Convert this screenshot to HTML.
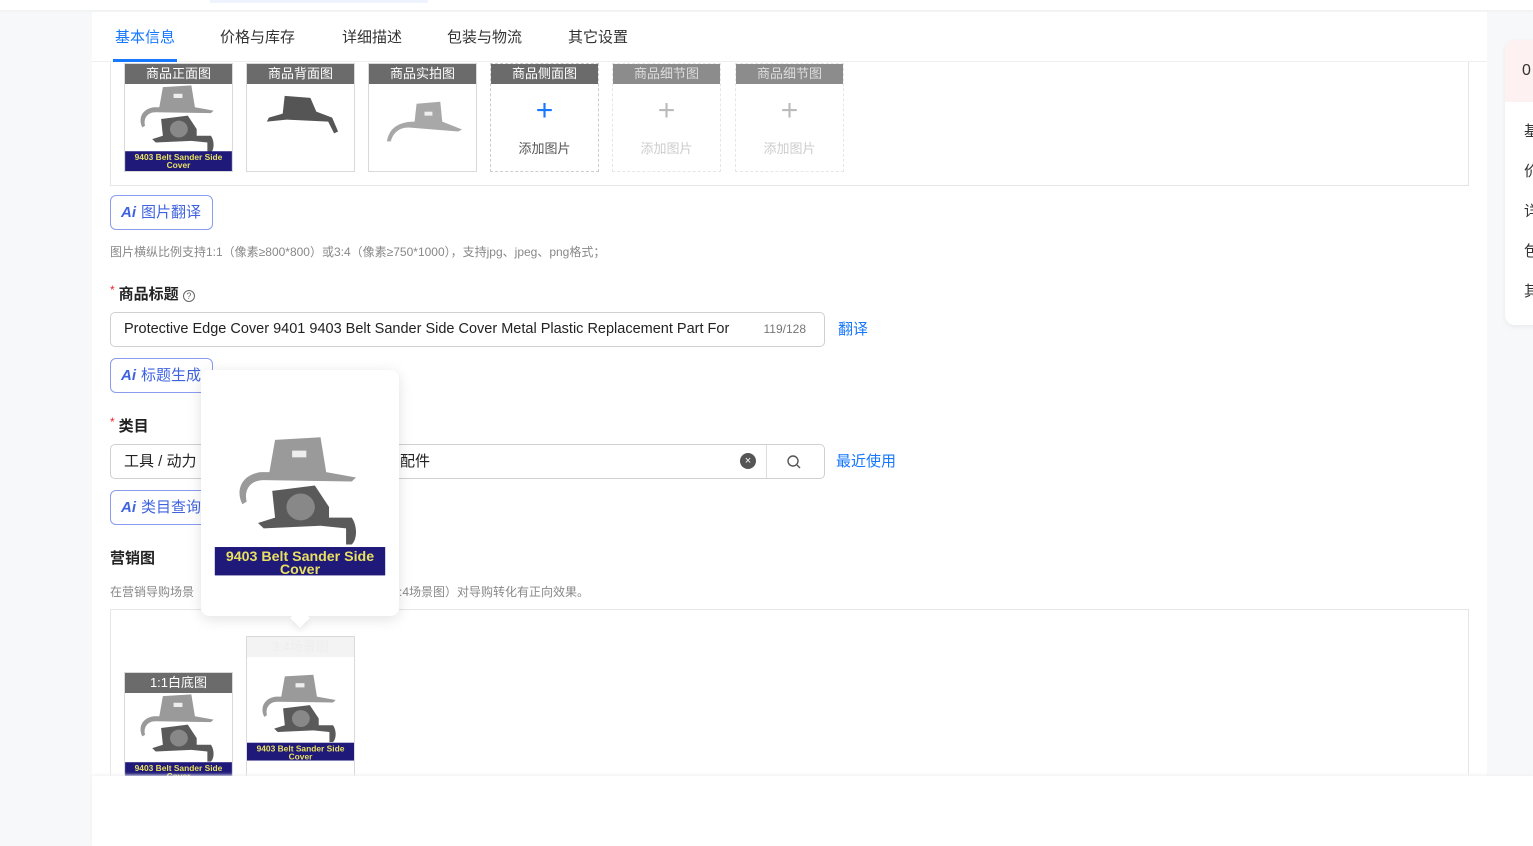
<!DOCTYPE html>
<html><head><meta charset="utf-8"><style>
*{margin:0;padding:0;box-sizing:border-box}
body{width:1533px;height:846px;overflow:hidden;background:#f7f8fa;font-family:"Liberation Sans","Noto Sans CJK SC",sans-serif;position:relative;color:#333}
.a{position:absolute}
.thumb{position:absolute;width:109px;height:109px;border:1px solid #d9d9d9;background:#fff;overflow:hidden}
.thumb .h{height:20px;background:#6b6b6b;color:#fff;font-size:13px;text-align:center;line-height:20px}
.thumb.dash{border:1px dashed #ccc}
.thumb.lite .h{background:#8c8c8c;color:#ddd}
.plus{text-align:center;font-size:30px;font-weight:200;line-height:30px;margin-top:12px}
.add{text-align:center;font-size:13px;margin-top:12px}
.aibtn{position:absolute;height:35px;border:1px solid #8a9bf0;border-radius:6px;color:#3f63e0;font-size:15px;line-height:33px;padding-left:10px;background:#fff}
.aibtn b{font-style:italic;font-weight:900;margin-right:5px;font-family:"Liberation Sans",sans-serif}
.lbl{position:absolute;font-size:15px;font-weight:bold;color:#222}
.lbl i{color:#f5222d;font-style:normal;font-weight:normal;font-size:12px;margin-right:4px;vertical-align:top}
.tip{position:absolute;font-size:12px;color:#888}
.inp{position:absolute;height:35px;border:1px solid #d0d0d0;border-radius:5px;background:#fff;font-size:15px;line-height:33px;padding-left:13px;color:#222}
.link{position:absolute;color:#1677ff;font-size:15px}
</style></head><body>
<div class="a" style="left:0;top:0;width:1533px;height:10px;background:#fff;box-shadow:0 1px 2px #eee"></div>
<div class="a" style="left:210px;top:0;width:218px;height:3px;background:#eef3fd"></div>
<div class="a" style="left:92px;top:12px;width:1395px;height:764px;background:#fff"></div>
<div class="a" style="left:92px;top:61px;width:1395px;height:1px;background:#eee"></div>
<div class="a" style="left:115px;top:26px;font-size:15px;color:#1677ff">基本信息</div>
<div class="a" style="left:113px;top:59px;width:64px;height:3px;background:#1677ff"></div>
<div class="a" style="left:220px;top:26px;font-size:15px">价格与库存</div>
<div class="a" style="left:342px;top:26px;font-size:15px">详细描述</div>
<div class="a" style="left:447px;top:26px;font-size:15px">包装与物流</div>
<div class="a" style="left:568px;top:26px;font-size:15px">其它设置</div>
<div class="a" style="left:110px;top:62px;width:1359px;height:124px;border:1px solid #e6e6e6;border-top:none"></div>
<svg width="0" height="0" style="position:absolute"><defs>
<g id="p"><path d="M38 6 L70 4 L74 30 L95 34 L92 37 L30 36 C20 36 16 44 18 52 L15 54 C10 44 14 32 28 30 L34 30 Z" fill="#9a9a9a"/><rect x="50" y="14" width="10" height="5" fill="#eee"/><path d="M36 44 L66 40 L76 56 L76 64 L92 64 C96 70 96 80 92 84 L88 84 L88 72 L70 70 L30 72 L26 68 L38 64 Z" fill="#5a5a5a"/><ellipse cx="56" cy="56" rx="10" ry="10" fill="#888"/></g>
</defs></svg>
<div class="thumb" style="left:124px;top:63px"><div class="h">商品正面图</div><svg width="107" height="87" viewBox="0 0 108 88"><use href="#p" transform="translate(4,-2) scale(0.9 0.85)"/><rect x="0" y="68" width="108" height="20" fill="#1f1a7a"/><text x="54" y="77" font-size="8.5" font-weight="bold" fill="#e8e060" text-anchor="middle" font-family="Liberation Sans">9403 Belt Sander Side</text><text x="54" y="85" font-size="8.5" font-weight="bold" fill="#e8e060" text-anchor="middle" font-family="Liberation Sans">Cover</text></svg></div>
<div class="thumb" style="left:246px;top:63px"><div class="h">商品背面图</div><svg width="107" height="87" viewBox="0 0 108 88"><path d="M38 12 L64 14 L70 28 L86 34 L92 48 L88 50 L82 38 L40 36 L20 38 L22 34 L36 30 Z" fill="#555"/></svg></div>
<div class="thumb" style="left:368px;top:63px"><div class="h">商品实拍图</div><svg width="107" height="87" viewBox="0 0 108 88"><path d="M48 20 L72 18 L74 38 L94 46 L90 48 L40 44 C30 44 24 50 22 58 L18 58 C20 46 28 38 46 38 Z" fill="#a8a8a8"/><rect x="56" y="28" width="8" height="4" fill="#eee"/></svg></div>
<div class="thumb dash" style="left:490px;top:63px"><div class="h">商品侧面图</div><div class="plus" style="color:#1677ff">+</div><div class="add" style="color:#555">添加图片</div></div>
<div class="thumb dash lite" style="left:612px;top:63px;border-color:#e6e6e6"><div class="h">商品细节图</div><div class="plus" style="color:#bbb">+</div><div class="add" style="color:#ccc">添加图片</div></div>
<div class="thumb dash lite" style="left:735px;top:63px;border-color:#e6e6e6"><div class="h">商品细节图</div><div class="plus" style="color:#bbb">+</div><div class="add" style="color:#ccc">添加图片</div></div>
<div class="aibtn" style="left:110px;top:195px;width:103px"><b>Ai</b>图片翻译</div>
<div class="tip" style="left:110px;top:243px">图片横纵比例支持1:1（像素≥800*800）或3:4（像素≥750*1000），支持jpg、jpeg、png格式；</div>
<div class="lbl" style="left:110px;top:283px"><i>*</i>商品标题 <span style="font-weight:normal;color:#666;border:1px solid #666;border-radius:50%;display:inline-block;width:12px;height:12px;line-height:11px;text-align:center;font-size:9px">?</span></div>
<div class="inp" style="left:110px;top:312px;width:715px;font-size:14.5px">Protective Edge Cover 9401 9403 Belt Sander Side Cover Metal Plastic Replacement Part For<span style="position:absolute;right:18px;font-size:12px;color:#777">119/128</span></div>
<div class="link" style="left:838px;top:318px">翻译</div>
<div class="aibtn" style="left:110px;top:358px;width:103px"><b>Ai</b>标题生成</div>
<div class="lbl" style="left:110px;top:415px"><i>*</i>类目</div>
<div class="inp" style="left:110px;top:444px;width:715px">工具 / 动力<span style="position:absolute;left:289px">配件</span>
<span style="position:absolute;left:629px;top:8px;width:16px;height:16px;border-radius:50%;background:#555;color:#fff;font-size:11px;line-height:16px;text-align:center">×</span>
<span style="position:absolute;left:655px;top:0;width:1px;height:33px;background:#ddd"></span>
<svg style="position:absolute;left:675px;top:9px" width="16" height="16" viewBox="0 0 16 16"><circle cx="7" cy="7" r="5" fill="none" stroke="#555" stroke-width="1.4"/><path d="M11 11 L14 14" stroke="#555" stroke-width="1.4"/></svg></div>
<div class="link" style="left:836px;top:450px">最近使用</div>
<div class="aibtn" style="left:110px;top:490px;width:103px"><b>Ai</b>类目查询</div>
<div class="lbl" style="left:110px;top:547px">营销图</div>
<div class="tip" style="left:110px;top:583px">在营销导购场景</div>
<div class="tip" style="left:399px;top:583px">:4场景图）对导购转化有正向效果。</div>
<div class="a" style="left:110px;top:609px;width:1359px;height:170px;border:1px solid #e6e6e6;border-bottom:none"></div>
<div class="thumb" style="left:124px;top:672px;height:110px"><div class="h">1:1白底图</div><svg width="107" height="87" viewBox="0 0 108 88"><use href="#p" transform="translate(4,-2) scale(0.9 0.85)"/><rect x="0" y="70" width="108" height="18" fill="#1f1a7a"/><text x="54" y="79" font-size="8.5" font-weight="bold" fill="#e8e060" text-anchor="middle" font-family="Liberation Sans">9403 Belt Sander Side</text><text x="54" y="87" font-size="8.5" font-weight="bold" fill="#e8e060" text-anchor="middle" font-family="Liberation Sans">Cover</text></svg></div>
<div class="thumb" style="left:246px;top:636px;height:150px"><div class="h" style="background:#f3f3f3;color:#eee">3:4场景图</div><svg width="107" height="110" viewBox="0 0 108 110"><use href="#p" transform="translate(4,14) scale(0.9 0.85)"/><rect x="0" y="86" width="108" height="18" fill="#1f1a7a"/><text x="54" y="95" font-size="8.5" font-weight="bold" fill="#e8e060" text-anchor="middle" font-family="Liberation Sans">9403 Belt Sander Side</text><text x="54" y="103" font-size="8.5" font-weight="bold" fill="#e8e060" text-anchor="middle" font-family="Liberation Sans">Cover</text></svg></div>
<div class="a" style="left:201px;top:370px;width:198px;height:246px;background:#fff;border-radius:8px;box-shadow:0 3px 14px rgba(0,0,0,.12)"></div>
<div class="a" style="left:293px;top:611px;width:14px;height:14px;background:#fff;transform:rotate(45deg);box-shadow:3px 3px 6px rgba(0,0,0,.06)"></div>
<svg class="a" style="left:214px;top:435px" width="172" height="142" viewBox="0 0 108 90"><use href="#p" transform="translate(4,-2) scale(0.9 0.85)"/><rect x="0" y="71" width="108" height="18" fill="#1f1a7a"/><text x="54" y="80" font-size="9" font-weight="bold" fill="#e8e060" text-anchor="middle" font-family="Liberation Sans">9403 Belt Sander Side</text><text x="54" y="88" font-size="9" font-weight="bold" fill="#e8e060" text-anchor="middle" font-family="Liberation Sans">Cover</text></svg>
<div class="a" style="left:92px;top:776px;width:1441px;height:70px;background:#fff;box-shadow:0 -1px 3px #f0f0f0"></div>
<div class="a" style="left:1505px;top:40px;width:40px;height:285px;background:#fff;border-radius:10px;box-shadow:0 2px 6px rgba(0,0,0,.06);overflow:hidden">
<div style="height:62px;background:#fdf1f1;font-size:16px;line-height:62px;padding-left:17px">0</div>
<div style="padding-left:19px;font-size:15px;line-height:40px;margin-top:10px">基<br>价<br>详<br>包<br>其</div></div>
</body></html>
